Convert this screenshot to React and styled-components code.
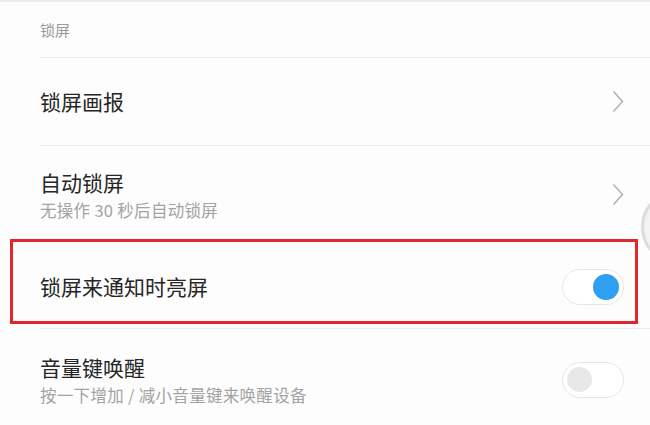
import React from "react";
import styled, { createGlobalStyle } from "styled-components";

const Global = createGlobalStyle`
  html, body { margin: 0; padding: 0; background: #fdfdfd; }
  body { font-family: "Noto Sans CJK SC", "Noto Sans", sans-serif; }
  * { box-sizing: border-box; }
`;

const Page = styled.div`
  position: relative;
  width: 650px;
  height: 425px;
  overflow: hidden;
  background: #fdfdfd;
  border-top: 2px solid #ebebeb;
  display: flex;
  flex-direction: column;
`;

const SectionHeader = styled.div`
  flex: none;
  height: 55px;
  padding-left: 40px;
  display: flex;
  align-items: center;
  font-size: 15px;
  color: #9a9a9a;
`;

const Row = styled.div`
  position: relative;
  margin-left: 40px;
  flex: none;
  height: ${(p) => p.$h}px;
  padding: ${(p) => p.$pt || 0}px 26px ${(p) => p.$pb || 0}px 0;
  border-top: ${(p) => (p.$noDivider ? "none" : "1px solid #ececec")};
  display: flex;
  align-items: center;
  justify-content: space-between;
`;

const TextBlock = styled.div`
  display: flex;
  flex-direction: column;
`;

const Title = styled.div`
  font-size: 21px;
  line-height: 31px;
  color: #262626;
`;

const Subtitle = styled.div`
  font-size: 16.5px;
  line-height: 24px;
  color: #a3a3a3;
  letter-spacing: 0.3px;
`;

const Track = styled.div`
  width: 62px;
  height: 36px;
  border-radius: 18px;
  border: 1px solid #e6e6e6;
  background: #fff;
  display: flex;
  align-items: center;
  justify-content: ${(p) => (p.$on ? "flex-end" : "flex-start")};
  padding: 0 4px;
`;

const Knob = styled.div`
  width: ${(p) => (p.$on ? 26 : 25)}px;
  height: ${(p) => (p.$on ? 26 : 25)}px;
  border-radius: 50%;
  background: ${(p) => (p.$on ? "#2f9ff2" : "#e8e8e8")};
`;

const Highlight = styled.div`
  position: absolute;
  left: -30px;
  right: 12px;
  top: 4px;
  bottom: 4px;
  border: 3px solid #e2262c;
  pointer-events: none;
`;

const FloatBall = styled.div`
  position: absolute;
  left: 641px;
  top: 188px;
  width: 74px;
  height: 74px;
  border-radius: 50%;
  border: 3px solid #dcdcdc;
  background: #f3f3f3;
`;

const Chevron = () => (
  <svg width="12" height="23" viewBox="0 0 12 23">
    <path d="M1.5 1.5 L10.5 11.5 L1.5 21.5" fill="none" stroke="#b3b3b3" strokeWidth="1.6" />
  </svg>
);

const Toggle = ({ on }) => (
  <Track $on={on}>
    <Knob $on={on} />
  </Track>
);

export default function App() {
  return (
    <>
      <Global />
      <Page>
        <SectionHeader>锁屏</SectionHeader>
        <Row $h={88}>
          <Title>锁屏画报</Title>
          <Chevron />
        </Row>
        <Row $h={90} $pt={21} $pb={13}>
          <TextBlock>
            <Title>自动锁屏</Title>
            <Subtitle>无操作 30 秒后自动锁屏</Subtitle>
          </TextBlock>
          <Chevron />
        </Row>
        <Row $h={93} $pt={10} $noDivider>
          <Title>锁屏来通知时亮屏</Title>
          <Toggle on />
          <Highlight />
        </Row>
        <Row $h={104} $pt={23} $pb={25}>
          <TextBlock>
            <Title>音量键唤醒</Title>
            <Subtitle>按一下增加 / 减小音量键来唤醒设备</Subtitle>
          </TextBlock>
          <Toggle on={false} />
        </Row>
        <FloatBall />
      </Page>
    </>
  );
}
